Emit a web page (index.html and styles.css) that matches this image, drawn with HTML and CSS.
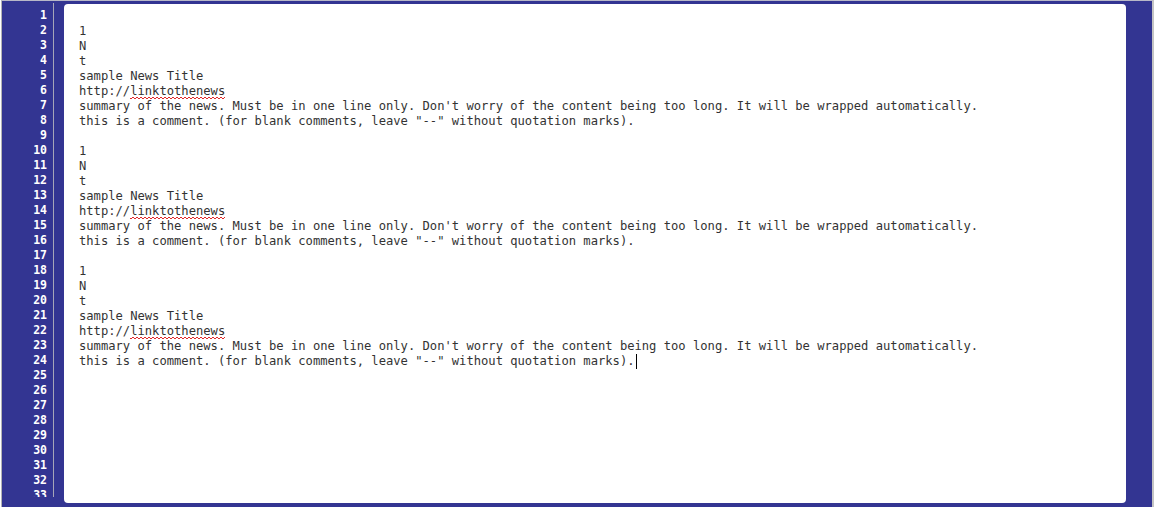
FILE: index.html
```html
<!DOCTYPE html>
<html>
<head>
<meta charset="utf-8">
<link rel="stylesheet" href="styles.css">
</head>
<body>
<div class="frame">
  <div class="gutter">
    <div class="nums">
      <div>1</div><div>2</div><div>3</div><div>4</div><div>5</div><div>6</div><div>7</div><div>8</div>
      <div>9</div><div>10</div><div>11</div><div>12</div><div>13</div><div>14</div><div>15</div><div>16</div>
      <div>17</div><div>18</div><div>19</div><div>20</div><div>21</div><div>22</div><div>23</div><div>24</div>
      <div>25</div><div>26</div><div>27</div><div>28</div><div>29</div><div>30</div><div>31</div><div>32</div>
      <div>33</div>
    </div>
  </div>
  <div class="editor">
    <div class="line">&nbsp;</div>
    <div class="line">1</div>
    <div class="line">N</div>
    <div class="line">t</div>
    <div class="line">sample News Title</div>
    <div class="line">http://<span class="spell">linktothenews</span></div>
    <div class="line">summary of the news. Must be in one line only. Don't worry of the content being too long. It will be wrapped automatically.</div>
    <div class="line">this is a comment. (for blank comments, leave "--" without quotation marks).</div>
    <div class="line">&nbsp;</div>
    <div class="line">1</div>
    <div class="line">N</div>
    <div class="line">t</div>
    <div class="line">sample News Title</div>
    <div class="line">http://<span class="spell">linktothenews</span></div>
    <div class="line">summary of the news. Must be in one line only. Don't worry of the content being too long. It will be wrapped automatically.</div>
    <div class="line">this is a comment. (for blank comments, leave "--" without quotation marks).</div>
    <div class="line">&nbsp;</div>
    <div class="line">1</div>
    <div class="line">N</div>
    <div class="line">t</div>
    <div class="line">sample News Title</div>
    <div class="line">http://<span class="spell">linktothenews</span></div>
    <div class="line">summary of the news. Must be in one line only. Don't worry of the content being too long. It will be wrapped automatically.</div>
    <div class="line">this is a comment. (for blank comments, leave "--" without quotation marks).<span class="caret"></span></div>
  </div>
</div>
</body>
</html>
```

FILE: styles.css
```css
html, body {
  margin: 0;
  padding: 0;
  background: #ffffff;
}

.frame {
  width: 1153px;
  height: 507px;
  box-sizing: border-box;
  margin-left: 1px;
  border-left: 1px solid #b4b4b4;
  border-right: 2px solid #c4c4c4;
  border-top: 1px solid #b8b8c8;
  background: #333592;
  display: flex;
  align-items: flex-start;
  overflow: hidden;
}

.gutter {
  width: 52px;
  height: 494px;
  margin-top: 2px;
  border-right: 1px solid #a6a6b8;
  box-sizing: border-box;
  overflow: hidden;
  flex: none;
}

.nums {
  padding-top: 5px;
  padding-right: 6px;
  text-align: right;
  color: #ffffff;
  font-family: "DejaVu Sans Mono", "Liberation Mono", monospace;
  font-weight: bold;
  font-size: 11.5px;
  line-height: 15px;
}

.editor {
  flex: none;
  width: 1062px;
  height: 499px;
  margin-top: 3px;
  margin-left: 10px;
  box-sizing: border-box;
  background: #ffffff;
  border-radius: 4px;
  padding: 5px 0 0 15px;
  color: #333333;
  font-family: "DejaVu Sans Mono", "Liberation Mono", monospace;
  font-size: 12.15px;
  line-height: 15px;
}

.line {
  height: 15px;
  white-space: pre;
}

.spell {
  display: inline-block;
  height: 15px;
  background-image:
    linear-gradient(135deg, transparent 45%, #e02828 45%, #e02828 60%, transparent 60%),
    linear-gradient(45deg, transparent 45%, #e02828 45%, #e02828 60%, transparent 60%);
  background-size: 4px 2px;
  background-repeat: repeat-x;
  background-position: 0 13px, 2px 13px;
}

.caret {
  display: inline-block;
  width: 1px;
  height: 15px;
  background: #000000;
  vertical-align: top;
  margin-left: 1px;
}
```
